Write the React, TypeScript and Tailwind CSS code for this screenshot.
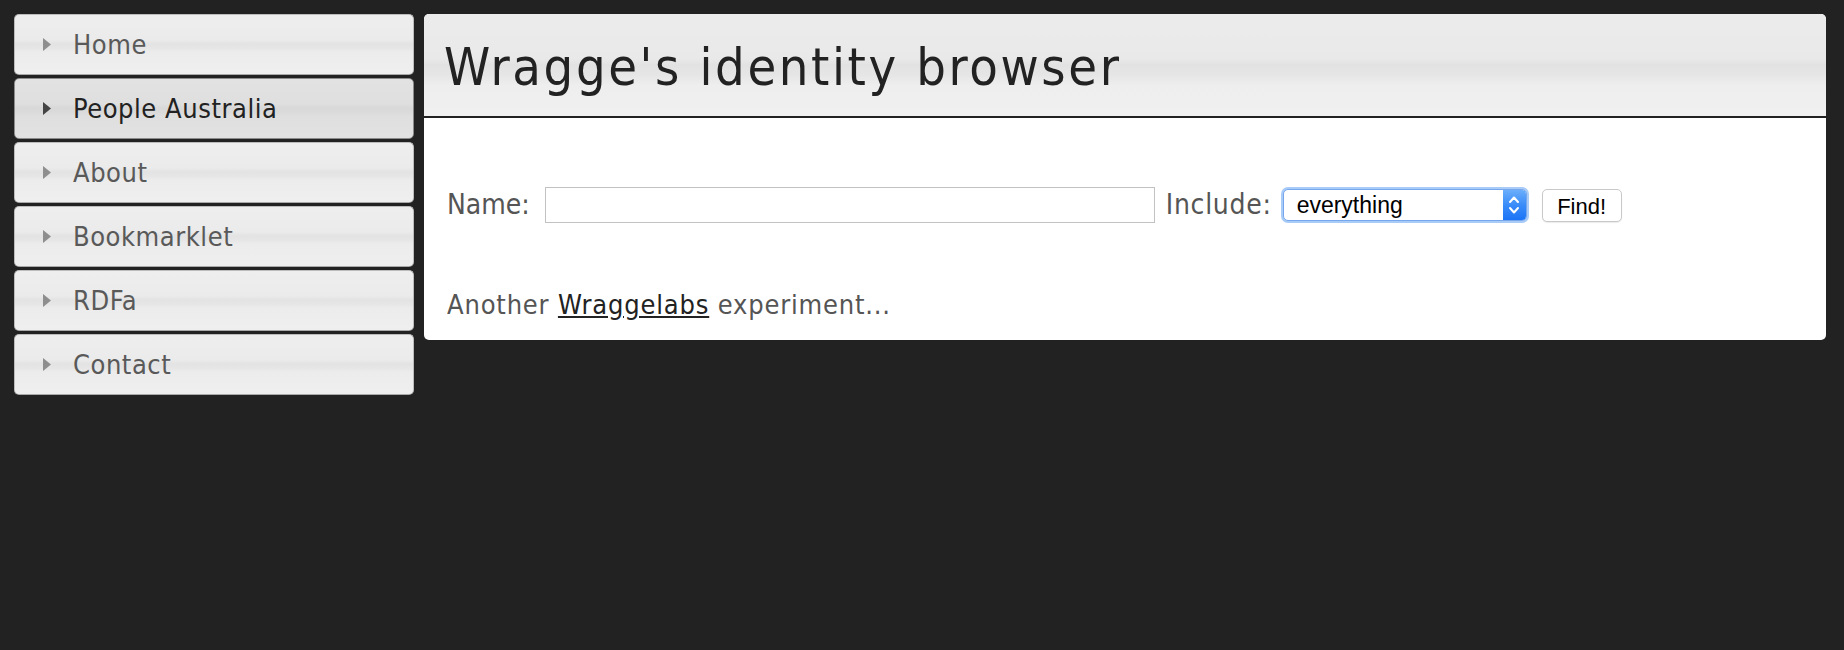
import React from 'react';

const navItems = [
    { label: 'Home' },
    { label: 'People Australia', active: true },
    { label: 'About' },
    { label: 'Bookmarklet' },
    { label: 'RDFa' },
    { label: 'Contact' },
];

const NavItem = ({ label, active }: { label: string, active?: boolean }) => (
    <a
        href="#"
        className={`h-[61px] flex items-center rounded-[5px] border pl-[28px] ${active
            ? 'border-[#8c8c8c] bg-[linear-gradient(180deg,#e2e2e2_0%,#dfdfdf_42%,#d8d8d8_49%,#dadada_56%,#dfdfdf_63%,#e2e2e2_100%)] text-[#222]'
            : 'border-[#bcbcbc] border-b-[#a9a9a9] bg-[linear-gradient(180deg,#eeeeee_0%,#ebebeb_42%,#e3e3e3_49%,#e6e6e6_56%,#ececec_63%,#efefef_100%)] text-[#595959]'}`}
    >
        <svg width="8" height="13" viewBox="0 0 8 13" className="shrink-0">
            <polygon points="0,0 8,6.5 0,13" fill={active ? '#444' : '#8e8e8e'} />
        </svg>
        <span className="ml-[22px] text-[27px] leading-none tracking-[0.02em]">{label}</span>
    </a>
);

export default function App() {
    return (
        <div className="min-h-[650px] bg-[#222222] flex items-start gap-[10px] pl-[14px] pr-[18px] pt-[14px] font-['DejaVu_Sans_Condensed','DejaVu_Sans',sans-serif] [font-stretch:condensed]">
            <nav className="w-[400px] shrink-0 flex flex-col gap-[3px]">
                {navItems.map(item => <NavItem key={item.label} {...item} />)}
            </nav>

            <main className="flex-1 bg-white rounded-[5px] overflow-hidden">
                <header className="h-[104px] flex items-center pl-[20px] pt-[4px] border-b-2 border-[#222] bg-[linear-gradient(180deg,#ececec_0%,#e9e9e9_44%,#e2e2e2_50%,#e6e6e6_60%,#eeeeee_70%,#f0f0f0_100%)]">
                    <h1 className="text-[52px] leading-none text-[#222] tracking-[0.05em]">Wragge's identity browser</h1>
                </header>

                <div className="h-[222px] pl-[23px] pt-[69px]">
                    <form className="flex items-center h-[36px] text-[28px] text-[#555]" onSubmit={e => e.preventDefault()}>
                        <label htmlFor="name">Name:</label>
                        <input id="name" type="text" className="ml-[15px] w-[610px] h-[36px] border border-[#c2c2c2] bg-white outline-none" />
                        <label className="ml-[11px] tracking-[0.025em]">Include:</label>
                        <div className="ml-[11px] w-[244px] h-[32px] flex items-stretch rounded-[5px] border border-[#76a6ec] shadow-[0_0_0_2px_#a9cbf8] bg-white font-['Liberation_Sans',Arial,sans-serif] text-[23px] tracking-normal text-black">
                            <span className="flex-1 flex items-center pl-[13px]">everything</span>
                            <span className="w-[23px] flex items-center justify-center rounded-r-[4px] bg-[linear-gradient(180deg,#6aaefc_0%,#3a8cf9_50%,#1c74f6_100%)]">
                                <svg width="12" height="22" viewBox="0 0 12 22" fill="none" stroke="white" strokeWidth="2" strokeLinecap="round" strokeLinejoin="round">
                                    <polyline points="2,8 6,3.5 10,8" />
                                    <polyline points="2,14 6,18.5 10,14" />
                                </svg>
                            </span>
                        </div>
                        <button type="submit" className="ml-[15px] w-[80px] h-[33px] rounded-[5px] border border-[#c9c9c9] bg-white shadow-[0_1px_1px_rgba(0,0,0,0.08)] font-['Liberation_Sans',Arial,sans-serif] text-[22px] tracking-normal text-black">
                            Find!
                        </button>
                    </form>

                    <p className="mt-[66px] text-[27px] leading-[32px] text-[#555] tracking-[0.03em]">
                        Another <a href="#" className="text-[#222] underline">Wraggelabs</a> experiment...
                    </p>
                </div>
            </main>
        </div>
    );
}
